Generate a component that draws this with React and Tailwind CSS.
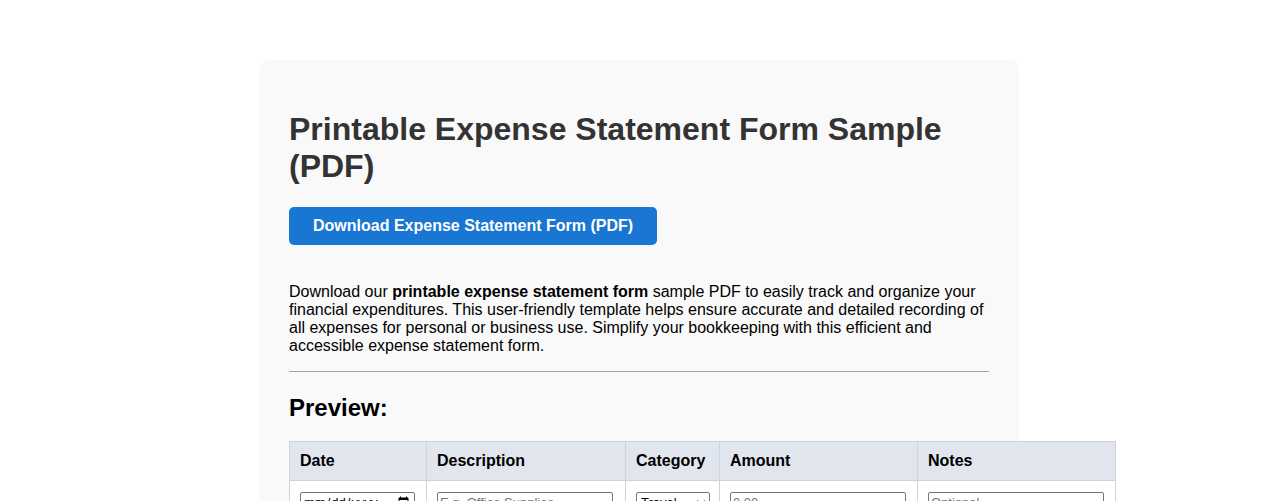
import React from "react";

export default function App() {
  const font = { fontFamily: '"Liberation Sans", Arial, sans-serif' };
  const inputCls =
    "h-[22px] w-[176px] rounded-[2px] border border-[#767676] bg-white px-[2px] text-[13px] placeholder:text-[#757575]";
  const tdCls = "border border-[#cfd3d8] px-[10px] pt-[9px] pb-[10px] align-top";
  return (
    <div className="min-h-screen bg-white pt-[60px]" style={font}>
      <div className="mx-auto w-[760px] rounded-[10px] bg-[#f9f9f9] p-[30px]">
        <h1 className="mt-[21px] mb-[22px] text-[32px] font-bold leading-[37px] text-[#333]">
          Printable Expense Statement Form Sample (PDF)
        </h1>
        <button className="h-[38px] rounded-[5px] bg-[#1976d2] px-[24px] text-[16px] font-bold leading-[18px] text-white">
          Download Expense Statement Form (PDF)
        </button>
        <p className="mt-[38px] text-[16px] leading-[18px] text-black">
          Download our <strong>printable expense statement form</strong> sample PDF to easily track and organize your
          financial expenditures. This user-friendly template helps ensure accurate and detailed recording of all
          expenses for personal or business use. Simplify your bookkeeping with this efficient and accessible expense
          statement form.
        </p>
        <hr className="mt-[16px] border-0 border-t border-[#a0a0a0]" />
        <h2 className="mt-[22px] mb-[19px] text-[24px] font-bold leading-[28px] text-black">Preview:</h2>
        <table className="w-[826px] table-fixed border-collapse text-[16px] text-black">
          <colgroup>
            <col className="w-[137px]" />
            <col className="w-[199px]" />
            <col className="w-[94px]" />
            <col className="w-[198px]" />
            <col className="w-[198px]" />
          </colgroup>
          <thead>
            <tr className="bg-[#e1e6ee]">
              {["Date", "Description", "Category", "Amount", "Notes"].map((h) => (
                <th key={h} className="h-[39px] border border-[#cfd3d8] px-[10px] pb-[1px] text-left font-bold leading-[18px]">
                  {h}
                </th>
              ))}
            </tr>
          </thead>
          <tbody>
            <tr className="bg-white">
              <td className={tdCls}>
                <input
                  type="date"
                  className="h-[22px] w-[115px] rounded-[2px] border border-[#767676] bg-white px-[2px] text-[13px]"
                />
              </td>
              <td className={tdCls}>
                <input placeholder="E.g. Office Supplies" className={inputCls} />
              </td>
              <td className={tdCls}>
                <select className="h-[22px] w-[74px] rounded-[2px] border border-[#767676] bg-white text-[13px]">
                  <option>Travel</option>
                  <option>Meals</option>
                  <option>Supplies</option>
                </select>
              </td>
              <td className={tdCls}>
                <input placeholder="0.00" className={inputCls} />
              </td>
              <td className={tdCls}>
                <input placeholder="Optional" className={inputCls} />
              </td>
            </tr>
          </tbody>
        </table>
      </div>
    </div>
  );
}
